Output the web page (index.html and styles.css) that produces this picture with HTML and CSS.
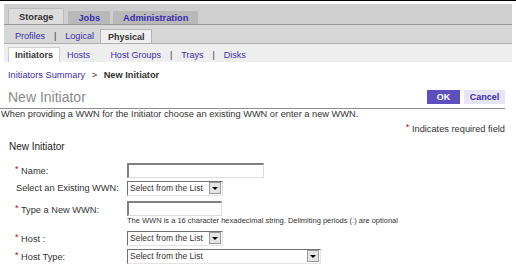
FILE: index.html
```html
<!DOCTYPE html>
<html>
<head>
    <title>New Initiator</title>
    <link rel="stylesheet" href="styles.css">
</head>
<body>
    <div class="topline"></div>
    <div class="tabs">
        <div class="tabs-l1">
            <span class="tab1 tab1-on">Storage</span>
            <a class="tab1">Jobs</a>
            <a class="tab1">Administration</a>
        </div>
        <div class="tabs-l2">
            <a class="tab2">Profiles</a><span class="sep">|</span><a class="tab2">Logical</a><span class="tab2 tab2-on">Physical</span>
        </div>
        <div class="tabs-l3">
            <span class="tab3 tab3-on">Initiators</span><a class="tab3">Hosts</a><span class="sep sep-hidden">|</span><a class="tab3">Host Groups</a><span class="sep">|</span><a class="tab3">Trays</a><span class="sep">|</span><a class="tab3">Disks</a>
        </div>
    </div>

    <div class="crumbs">
        <a class="link">Initiators Summary</a>
        <span class="crumb-arrow">&gt;</span>
        <span class="crumb-here">New Initiator</span>
    </div>

    <div class="title-row">
        <h1 class="title">New Initiator</h1>
        <div class="buttons">
            <button class="btn btn-primary">OK</button>
            <button class="btn btn-secondary">Cancel</button>
        </div>
    </div>
    <p class="help">When providing a WWN for the Initiator choose an existing WWN or enter a new WWN.</p>
    <p class="required-note"><span class="req">*</span> Indicates required field</p>

    <h2 class="section">New Initiator</h2>
    <form class="form">
        <div class="row">
            <label class="label"><span class="req">*</span> Name:</label>
            <div class="input input-name"></div>
        </div>
        <div class="row">
            <label class="label label-plain">Select an Existing WWN:</label>
            <div class="select select-short">
                <span class="select-text">Select from the List</span>
                <span class="select-btn"><span class="arrow"></span></span>
            </div>
        </div>
        <div class="row row-wwn">
            <label class="label"><span class="req">*</span> Type a New WWN:</label>
            <div class="field">
                <div class="input input-wwn"></div>
                <div class="hint">The WWN is a 16 character hexadecimal string. Delimiting periods (.) are optional</div>
            </div>
        </div>
        <div class="row">
            <label class="label"><span class="req">*</span> Host :</label>
            <div class="select select-short">
                <span class="select-text">Select from the List</span>
                <span class="select-btn"><span class="arrow"></span></span>
            </div>
        </div>
        <div class="row">
            <label class="label"><span class="req">*</span> Host Type:</label>
            <div class="select select-long">
                <span class="select-text">Select from the List</span>
                <span class="select-btn"><span class="arrow"></span></span>
            </div>
        </div>
    </form>
</body>
</html>
```

FILE: styles.css
```css
body {
    margin: 0;
    background: #ffffff;
    font-family: "Liberation Sans", Arial, sans-serif;
    font-size: 9.25px;
    color: #333333;
}
a {
    color: #3a2cb0;
}
.topline {
    height: 1px;
    background: #000000;
}
.tabs {
    margin: 3px 4px 0 4px;
}
.tabs-l1 {
    display: flex;
    align-items: flex-end;
    height: 20px;
    padding-left: 4px;
    background: #cfcfcf;
}
.tab1 {
    display: flex;
    align-items: center;
    height: 13px;
    padding: 0 10px;
    margin-right: 3px;
    background: #b9b9b9;
    font-weight: bold;
    color: #3a2cb0;
}
.tab1-on {
    height: 15px;
    margin-right: 4px;
    padding: 0 10px;
    background: #dcdcdc;
    border: 1px solid #bdbdbd;
    border-bottom: none;
    color: #333333;
}
.tabs-l2, .tabs-l3 {
    font-size: 9px;
}
.tabs-l2 {
    display: flex;
    align-items: flex-end;
    height: 18px;
    padding-left: 11px;
    border-top: 1px solid #9a9a9a;
    background: #d7d7d7;
}
.tab2, .tab3 {
    display: flex;
    align-items: center;
    height: 14px;
}
.tab2-on {
    padding: 0 7px;
    margin-left: 6px;
    background: #efefef;
    border: 1px solid #b5b5b5;
    border-bottom: none;
    height: 13px;
    font-weight: bold;
    color: #333333;
}
.sep {
    display: flex;
    align-items: center;
    height: 14px;
    padding: 0 9px;
    color: #333333;
}
.sep-hidden {
    visibility: hidden;
}
.tabs-l3 {
    display: flex;
    align-items: flex-end;
    height: 18px;
    padding-left: 4px;
    border-top: 1px solid #b0b0b0;
    background: #eeeeee;
}
.tab3-on {
    height: 14px;
    padding: 0 6px;
    margin-right: 7px;
    background: #ffffff;
    border: 1px solid #cfcfcf;
    border-bottom: none;
    font-weight: bold;
    color: #333333;
}
.crumbs {
    margin: 7px 0 0 8px;
    line-height: 12px;
}
.crumb-arrow {
    margin: 0 4px;
}
.crumb-here {
    font-weight: bold;
    color: #333333;
}
.title-row {
    display: flex;
    justify-content: space-between;
    align-items: flex-end;
    width: 505px;
    margin-top: 8px;
    padding-bottom: 3px;
    border-bottom: 1px solid #8e8e8e;
}
.title {
    margin: 0 0 0 8px;
    font-size: 14px;
    font-weight: normal;
    line-height: 16px;
    color: #8a8a8a;
}
.buttons {
    display: flex;
    gap: 4px;
    margin-bottom: 1px;
}
.btn {
    height: 14px;
    padding: 0;
    border: none;
    font-family: inherit;
    font-size: 9px;
    font-weight: bold;
}
.btn-primary {
    width: 33px;
    background: #5e4fbf;
    color: #ffffff;
}
.btn-secondary {
    width: 41px;
    background: #e7e5f5;
    color: #3a2cb0;
}
.help {
    margin: 0 0 0 1px;
    line-height: 11px;
}
.required-note {
    width: 505px;
    margin: 2px 0 0 0;
    text-align: right;
    line-height: 11px;
}
.req {
    color: #cc0000;
    font-size: 9px;
    vertical-align: 2px;
}
.section {
    margin: 6px 0 0 9px;
    font-size: 10px;
    font-weight: normal;
    line-height: 12px;
    color: #222222;
}
.form {
    margin-top: 8px;
}
.row {
    display: flex;
    align-items: center;
    height: 18px;
    padding-left: 15px;
}
.label {
    width: 112px;
}
.label-plain {
    margin-left: 1px;
    width: 111px;
}
.row-wwn {
    height: auto;
    align-items: flex-start;
    margin: 3px 0 3px 0;
}
.row-wwn .label {
    line-height: 16px;
}
.field {
    display: flex;
    flex-direction: column;
}
.input {
    height: 12px;
    background: #ffffff;
    border-top: 2px solid #808080;
    border-left: 2px solid #808080;
    border-right: 1px solid #dddddd;
    border-bottom: 1px solid #dddddd;
}
.input-name {
    width: 134px;
}
.input-wwn {
    width: 92px;
    margin-top: 1px;
}
.hint {
    font-size: 7.5px;
    line-height: 10px;
    white-space: nowrap;
}
.select {
    display: flex;
    align-items: center;
    justify-content: space-between;
    height: 13px;
    background: #ffffff;
    border-top: 1px solid #707070;
    border-left: 1px solid #707070;
    border-right: 1px solid #e4e4e4;
    border-bottom: 1px solid #e4e4e4;
}
.select-short {
    width: 94px;
}
.select-long {
    width: 192px;
}
.select-text {
    padding-left: 2px;
    font-size: 8.5px;
    white-space: nowrap;
}
.select-btn {
    display: flex;
    align-items: center;
    justify-content: center;
    flex: none;
    width: 10px;
    height: 10px;
    margin-right: 1px;
    background: #e4e4e4;
    border: 1px solid #9a9a9a;
}
.arrow {
    width: 0;
    height: 0;
    border-left: 3px solid transparent;
    border-right: 3px solid transparent;
    border-top: 3px solid #000000;
}
```
